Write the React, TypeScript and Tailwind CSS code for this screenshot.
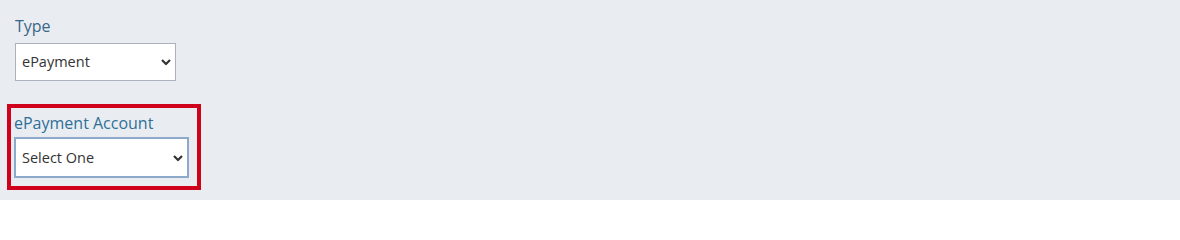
// Payment type form — "Type" select and a highlighted "ePayment Account" select.

const Chevron = () => (
  <svg
    className="pointer-events-none absolute top-1/2 -translate-y-1/2"
    width="10"
    height="7"
    viewBox="0 0 10 7"
    fill="none"
  >
    <path d="M1 1.5l4 4 4-4" stroke="#333333" strokeWidth="2.2" />
  </svg>
)

interface SelectProps {
  value: string
  options: string[]
  className: string
  chevronRight: string
}

function Select({ value, options, className, chevronRight }: SelectProps) {
  return (
    <div className="relative">
      <select
        defaultValue={value}
        className={`appearance-none bg-white text-[14.5px] text-[#333333] pl-[6px] outline-none ${className}`}
      >
        {options.map((o) => (
          <option key={o}>{o}</option>
        ))}
      </select>
      <span className={`pointer-events-none absolute top-0 bottom-0 ${chevronRight}`}>
        <Chevron />
      </span>
    </div>
  )
}

export default function App() {
  return (
    <div
      className="min-h-[200px] bg-[#e9edf1] pl-[15px] pt-[16px]"
      style={{ fontFamily: '"Open Sans", "Liberation Sans", sans-serif' }}
    >
      {/* Type */}
      <div className="text-[16px] leading-[20px] text-[#3a6688]">Type</div>
      <div className="mt-[7px] w-[161px]">
        <Select
          value="ePayment"
          options={['ePayment', 'Check', 'Cash']}
          className="w-[161px] h-[38px] border border-[#aab3bd]"
          chevronRight="right-[15px]"
        />
      </div>

      {/* ePayment Account, highlighted */}
      <div className="mt-[23px] -ml-[8px] w-[194px] border-4 border-[#d0021b] pl-[3px] pr-[8px] pt-[5px] pb-[8px]">
        <div className="text-[16px] leading-[20px] text-[#2f6f98]">ePayment Account</div>
        <div className="mt-[4px]">
          <Select
            value="Select One"
            options={['Select One']}
            className="w-[175px] h-[41px] border-2 border-[#8eaacb]"
            chevronRight="right-[16px]"
          />
        </div>
      </div>
    </div>
  )
}
